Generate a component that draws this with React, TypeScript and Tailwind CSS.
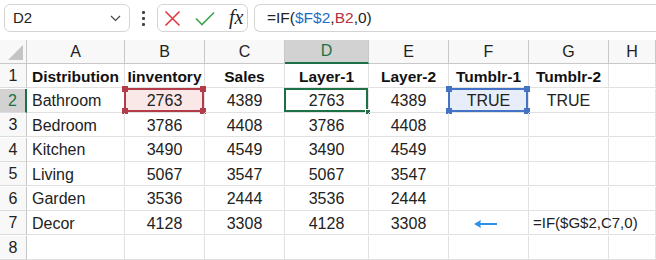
import React from "react";

const cols = ["A", "B", "C", "D", "E", "F", "G", "H"];
const rows: string[][] = [
  ["Distribution", "Iinventory", "Sales", "Layer-1", "Layer-2", "Tumblr-1", "Tumblr-2", ""],
  ["Bathroom", "2763", "4389", "2763", "4389", "TRUE", "TRUE", ""],
  ["Bedroom", "3786", "4408", "3786", "4408", "", "", ""],
  ["Kitchen", "3490", "4549", "3490", "4549", "", "", ""],
  ["Living", "5067", "3547", "5067", "3547", "", "", ""],
  ["Garden", "3536", "2444", "3536", "2444", "", "", ""],
  ["Decor", "4128", "3308", "4128", "3308", "", "", ""],
  ["", "", "", "", "", "", "", ""],
];

function Corner({ c, pos }: { c: string; pos: string }) {
  return <span className={`absolute w-[6px] h-[6px] ${c} ${pos}`} />;
}

export default function App() {
  return (
    <div
      className="w-[656px] h-[260px] bg-white overflow-hidden text-[#222]"
      style={{ fontFamily: '"Liberation Sans", Arial, sans-serif' }}
    >
      {/* toolbar */}
      <div className="h-[40px] flex items-start pt-[4px] pl-[4px] bg-white">
        <div className="w-[126px] h-[28px] border border-[#d4d4d4] rounded-[6px] flex items-center justify-between pl-[8px] pr-[8px]">
          <span className="text-[15px]">D2</span>
          <svg width="11" height="7" viewBox="0 0 11 7">
            <path d="M1 1 L5.5 5.5 L10 1" stroke="#444" strokeWidth="1.2" fill="none" />
          </svg>
        </div>
        <div className="w-[27px] h-[28px] flex flex-col items-center justify-center gap-[3px]">
          <span className="w-[3px] h-[3px] bg-[#444] rounded-[1px]" />
          <span className="w-[3px] h-[3px] bg-[#444] rounded-[1px]" />
          <span className="w-[3px] h-[3px] bg-[#444] rounded-[1px]" />
        </div>
        <div className="w-[91px] h-[28px] border border-[#d4d4d4] rounded-[6px] flex items-center pl-[6px] gap-[14px]">
          <svg width="17" height="17" viewBox="0 0 17 17">
            <path d="M1.5 1.5 L15.5 15.5 M15.5 1.5 L1.5 15.5" stroke="#e0393e" strokeWidth="1.6" fill="none" />
          </svg>
          <svg width="20" height="15" viewBox="0 0 20 15">
            <path d="M1 7.5 L7 13.5 L19 1.5" stroke="#3fa34d" strokeWidth="1.6" fill="none" />
          </svg>
          <span
            className="text-[20px] italic leading-none -mt-[3px]"
            style={{ fontFamily: '"Liberation Serif", "Times New Roman", serif' }}
          >
            fx
          </span>
        </div>
        <div className="ml-[6px] flex-1 h-[28px] border border-[#d4d4d4] border-r-0 rounded-l-[6px] flex items-center pl-[12px] text-[15.5px]">
          <span>=IF(</span>
          <span className="text-[#1b6fc2]">$F$2</span>
          <span>,</span>
          <span className="text-[#b2323e]">B2</span>
          <span>,0)</span>
        </div>
      </div>

      {/* grid */}
      <div className="grid grid-cols-[27px_98px_80px_80px_84px_80px_80px_80px_47px] h-[220px]">
        {/* header row */}
        <div className="relative h-[24px] bg-[#f8f8f8] border-r border-b border-[#c8c8c8]">
          <svg className="absolute right-[3px] bottom-[3px]" width="15" height="15" viewBox="0 0 15 15">
            <path d="M15 0 L15 15 L0 15 Z" fill="#c4c4c4" />
          </svg>
        </div>
        {cols.map((c) => (
          <div
            key={c}
            className={`h-[24px] flex items-center justify-center text-[16px] border-r ${
              c === "D"
                ? "bg-[#d2d2d2] border-b-2 border-b-[#1e7145] text-[#1e7145] border-r-[#c8c8c8]"
                : "bg-[#f8f8f8] border-b border-[#c8c8c8] text-[#222]"
            }`}
          >
            {c}
          </div>
        ))}
        {rows.map((r, ri) => (
          <React.Fragment key={ri}>
            <div
              className={`h-[24px] flex items-center justify-center pt-[1px] text-[16px] border-b border-b-[#dcdcdc] ${
                ri === 1
                  ? "bg-[#d2d2d2] text-[#1e7145] border-r-2 border-r-[#1e7145]"
                  : "bg-[#f8f8f8] border-r border-r-[#c8c8c8]"
              }`}
            >
              {ri + 1}
            </div>
            {r.map((v, ci) => {
              const bold = ri === 0;
              const left = ci === 0;
              const isB2 = ri === 1 && ci === 1;
              const isD2 = ri === 1 && ci === 3;
              const isF2 = ri === 1 && ci === 5;
              const g7 = ri === 6 && ci === 6;
              const f7 = ri === 6 && ci === 5;
              return (
                <div
                  key={ci}
                  className={`relative h-[24px] flex items-center pt-[2px] border-r border-b border-[#e1e1e1] whitespace-nowrap ${
                    left || g7 ? "justify-start pl-[5px]" : "justify-center"
                  } ${bold ? "font-bold text-[15.5px] text-[#111]" : "text-[16px]"} ${
                    isB2 ? "bg-[#fae8e9]" : ""
                  } ${isF2 ? "bg-[#e7eef9]" : ""}`}
                >
                  {g7 ? (
                    <span className="text-[15px] -ml-[1px]">=IF($G$2,C7,0)</span>
                  ) : (
                    v
                  )}
                  {f7 && (
                    <svg className="absolute left-[25px] top-[9px]" width="24" height="8" viewBox="0 0 24 8">
                      <path d="M4 4 L23 4" stroke="#2b90e6" strokeWidth="2" />
                      <path d="M0 4 L7 0 L6 4 L7 8 Z" fill="#2b90e6" />
                    </svg>
                  )}
                  {isB2 && (
                    <div className="absolute -left-[1px] -top-[1px] right-0 bottom-0 border-2 border-[#b23c4a]">
                      <Corner c="bg-[#b23c4a]" pos="-left-[4px] -top-[4px]" />
                      <Corner c="bg-[#b23c4a]" pos="-right-[4px] -top-[4px]" />
                      <Corner c="bg-[#b23c4a]" pos="-left-[4px] -bottom-[4px]" />
                      <Corner c="bg-[#b23c4a]" pos="-right-[4px] -bottom-[4px]" />
                    </div>
                  )}
                  {isD2 && (
                    <div className="absolute -left-[1px] -top-[1px] right-0 bottom-0 border-2 border-[#1e7145]">
                      <Corner c="bg-[#1e7145] border border-white" pos="-right-[5px] -bottom-[5px]" />
                    </div>
                  )}
                  {isF2 && (
                    <div className="absolute -left-[1px] -top-[1px] right-0 bottom-0 border-2 border-[#4472c4]">
                      <Corner c="bg-[#4472c4]" pos="-left-[4px] -top-[4px]" />
                      <Corner c="bg-[#4472c4]" pos="-right-[4px] -top-[4px]" />
                      <Corner c="bg-[#4472c4]" pos="-left-[4px] -bottom-[4px]" />
                      <Corner c="bg-[#4472c4]" pos="-right-[4px] -bottom-[4px]" />
                    </div>
                  )}
                </div>
              );
            })}
          </React.Fragment>
        ))}
      </div>
    </div>
  );
}
